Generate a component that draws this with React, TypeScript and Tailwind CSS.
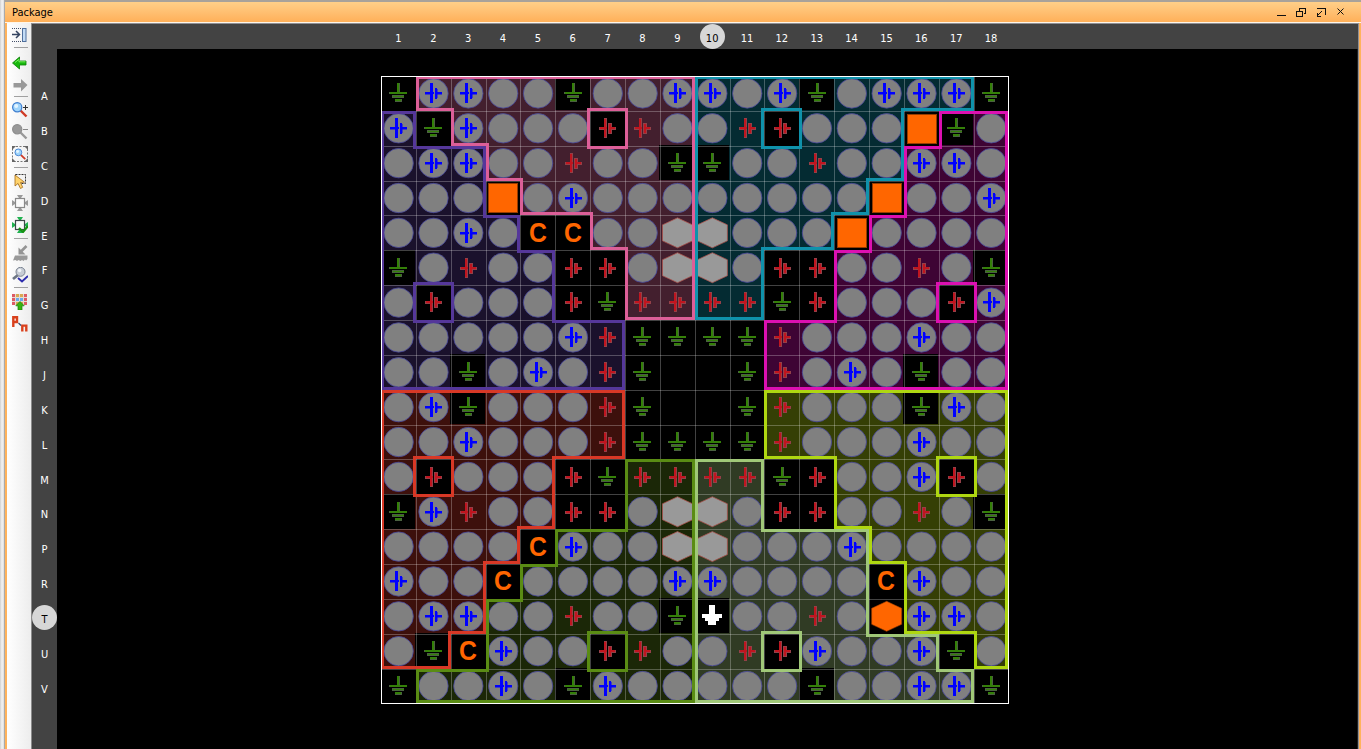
import type { ReactNode } from "react";

const PITCH = 34.86;
const SIZE = 628;
const COUNT = 18;

const ROW_NAMES = "ABCDEFGHJKLMNPRTUV".split("");

// One letter per I/O bank; "." marks a pad outside every bank.
const REGIONS = [
  ".pppppppptttttttt.",
  "u.pppp.pptt.ttt.mm",
  "uuuppppppttttttmmm",
  "uuu.pppppttttt.mmm",
  "uuuu..ppptttt.mmmm",
  "uuuuu..pptt..mmmmm",
  "u.uuu..pptt..mmm.m",
  "uuuuuuu....mmmmmmm",
  "uuuuuuu....mmmmmmm",
  "rrrrrrr....yyyyyyy",
  "rrrrrrr....yyyyyyy",
  "r.rrr..ggll..yyy.y",
  "rrrrr..ggll..yyyyy",
  "rrrr.gggglllllyyyy",
  "rrr.ggggglllll.yyy",
  "rrrgggggglllll.yyy",
  "rr.ggg.ggll.llll.y",
  ".ggggggggllllllll.",
];

// o ball, b bank supply, r core supply, g ground, h/H hexagon, s square, C config, w cursor
const PINS = [
  "gbboogoobbobgobbbg",
  "bgbooorroorrooosgo",
  "obboorooggooroobbo",
  "ooosoboooooooosoob",
  "ooboCCoohhooosoooo",
  "gorooorr".slice(0, 5) + "rrohhorroorog",
  "orooorgrrrrgrooorb",
  "ooooobrggggroooboo",
  "oogoborg  grobogoo",
  "obgooorg  grooogbo",
  "oobooorggggroooboo",
  "orooorgrrrrgroobro",
  "gbroorrohhorroorog",
  "ooooCboohhoooboooo",
  "booCoooobbooooCboo",
  "obbooroogwooroHbbo".replace(" ", ""),
  "ogCboorroorrboobgo",
  "goobogbooooogoobbg",
];

const FILLS: Record<string, string> = {
  p: "#431f2e",
  t: "#042b32",
  u: "#1a112c",
  m: "#3e0434",
  r: "#3d100c",
  y: "#353f05",
  g: "#1b2707",
  l: "#303b24",
};

const EDGES: Record<string, string> = {
  p: "#dc5f98",
  t: "#0f92ab",
  u: "#55379a",
  m: "#dc10b1",
  r: "#d83826",
  y: "#afd711",
  g: "#5a8c14",
  l: "#a0c878",
};

const at = (i: number) => Math.floor(0.42 + PITCH * i);
const mid = (i: number) => 0.4 + PITCH * (i + 0.5);
const regionAt = (r: number, c: number) => REGIONS[r]?.[c] ?? ".";

const cells = PINS.flatMap((line, r) =>
  line.split("").map((kind, c) => ({ r, c, kind, region: regionAt(r, c) })),
);

function BankSupply() {
  return (
    <g fill="#0000ff" shapeRendering="crispEdges">
      <rect x="-8" y="-1" width="9" height="2" />
      <rect x="-3" y="-10" width="3" height="20" />
      <rect x="2" y="-5" width="2" height="11" />
      <rect x="2" y="-1" width="7" height="2" />
      <rect x="-8" y="1" width="8" height="1" fillOpacity="0.5" />
      <rect x="4" y="-4" width="1" height="9" fillOpacity="0.5" />
      <rect x="4" y="1" width="5" height="1" fillOpacity="0.5" />
    </g>
  );
}

function CoreSupply() {
  return (
    <g shapeRendering="crispEdges">
      <g fill="#934048">
        <rect x="-8" y="-1" width="8" height="3" />
        <rect x="-3" y="-10" width="3" height="20" />
        <rect x="1" y="-5" width="4" height="11" />
        <rect x="2" y="-1" width="7" height="3" />
      </g>
      <g fill="#c0151f">
        <rect x="-7" y="-1" width="7" height="2" />
        <rect x="-3" y="-9" width="2" height="18" />
        <rect x="2" y="-4" width="2" height="9" />
        <rect x="3" y="-1" width="5" height="2" />
      </g>
    </g>
  );
}

function Ground() {
  return (
    <g shapeRendering="crispEdges">
      <g fill="#4a6040">
        <rect x="-1" y="-10" width="3" height="9" />
        <rect x="-9" y="-1" width="18" height="2" />
        <rect x="-6" y="2" width="12" height="3" />
        <rect x="-3" y="6" width="7" height="3" />
      </g>
      <g fill="#348008">
        <rect x="-1" y="-10" width="2" height="10" />
        <rect x="-8" y="-1" width="17" height="2" />
        <rect x="-5" y="3" width="11" height="1" />
        <rect x="-3" y="6" width="6" height="2" />
      </g>
    </g>
  );
}

const HEX = "0,-15 15,-8 15,8 0,15 -15,8 -15,-8";

function Ball() {
  return <circle r="14.7" fill="#808080" stroke="#45459b" strokeWidth="0.8" />;
}

function Glyph({ kind }: { kind: string }) {
  switch (kind) {
    case "b":
      return <BankSupply />;
    case "r":
      return <CoreSupply />;
    case "g":
      return <Ground />;
    case "C":
      return (
        <text
          x="0"
          y="9"
          textAnchor="middle"
          fill="#ff6600"
          transform="scale(.92 1)"
          className="font-['Liberation_Sans',sans-serif] text-[27px] font-bold"
        >
          C
        </text>
      );
    case "w":
      return (
        <path
          d="M-3-11H3V-2H10V2H7V5H4V9H-4V5H-7V2H-10V-2H-3z"
          fill="#fff"
          shapeRendering="crispEdges"
        />
      );
    default:
      return null;
  }
}

function Body({ kind }: { kind: string }) {
  switch (kind) {
    case "o":
    case "b":
      return <Ball />;
    case "h":
      return <polygon points={HEX} fill="#999999" stroke="#a8504b" strokeWidth="0.8" />;
    case "H":
      return <polygon points={HEX} fill="#ff6600" stroke="#a04000" strokeWidth="0.6" />;
    default:
      return null;
  }
}

function RegionEdge({ r, c, region }: { r: number; c: number; region: string }) {
  const x0 = at(c) + (c === 0 ? 1 : 0);
  const y0 = at(r) + (r === 0 ? 1 : 0);
  const x1 = at(c + 1);
  const y1 = at(r + 1);
  const w = x1 - x0;
  const h = y1 - y0;
  const left = c === 0 ? 2 : 3;
  const top = r === 0 ? 2 : 3;
  const same = (dr: number, dc: number) => regionAt(r + dr, c + dc) === region;
  const parts: [number, number, number, number][] = [];
  if (!same(-1, 0)) parts.push([x0, y0, w, top]);
  if (!same(1, 0)) parts.push([x0, y1 - 3, w, 3]);
  if (!same(0, -1)) parts.push([x0, y0, left, h]);
  if (!same(0, 1)) parts.push([x1 - 3, y0, 3, h]);
  if (!same(-1, -1)) parts.push([x0, y0, left, top]);
  if (!same(-1, 1)) parts.push([x1 - 3, y0, 3, top]);
  if (!same(1, -1)) parts.push([x0, y1 - 3, left, 3]);
  if (!same(1, 1)) parts.push([x1 - 3, y1 - 3, 3, 3]);
  return (
    <g fill={EDGES[region]}>
      {parts.map(([x, y, pw, ph], i) => (
        <rect key={i} x={x} y={y} width={pw} height={ph} />
      ))}
    </g>
  );
}

function PackageMap() {
  const inRegion = cells.filter((cell) => cell.region !== ".");
  return (
    <svg width={SIZE} height={SIZE} viewBox={`0 0 ${SIZE} ${SIZE}`} className="block">
      <g shapeRendering="crispEdges">
        {inRegion.map(({ r, c, region }) => (
          <rect
            key={`${r}-${c}`}
            x={at(c)}
            y={at(r)}
            width={at(c + 1) - at(c)}
            height={at(r + 1) - at(r)}
            fill={FILLS[region]}
          />
        ))}
        {inRegion
          .filter(({ kind }) => kind === "g" || kind === "w")
          .map(({ r, c }) => (
            <rect
              key={`${r}-${c}`}
              x={Math.floor(PITCH * c - 0.08)}
              y={Math.floor(PITCH * r - 0.08)}
              width="35"
              height="35"
              fill="#000"
            />
          ))}
        {Array.from({ length: COUNT - 1 }, (_, i) => (
          <g key={i} fill="#fff" fillOpacity="0.26">
            <rect x={at(i + 1)} y="0" width="1" height={SIZE} />
            <rect x="0" y={at(i + 1)} width={SIZE} height="1" />
          </g>
        ))}
      </g>
      {cells.map(({ r, c, kind }) => (
        <g key={`${r}-${c}`}>
          {kind === "s" ? (
            <rect
              x={Math.round(mid(c)) - 14.5}
              y={Math.round(mid(r)) - 14.5}
              width="29"
              height="29"
              fill="#ff6600"
              stroke="#963c00"
              shapeRendering="crispEdges"
            />
          ) : (
            <>
              <g transform={`translate(${mid(c) - 0.2} ${mid(r) - 0.4})`}>
                <Body kind={kind} />
              </g>
              <g transform={`translate(${Math.floor(mid(c))} ${Math.floor(mid(r))})`}>
                <Glyph kind={kind} />
              </g>
            </>
          )}
        </g>
      ))}
      <g shapeRendering="crispEdges">
        {inRegion.map(({ r, c, region }) => (
          <RegionEdge key={`${r}-${c}`} r={r} c={c} region={region} />
        ))}
      </g>
      <rect x="0.5" y="0.5" width={SIZE - 1} height={SIZE - 1} fill="none" stroke="#fff" shapeRendering="crispEdges" />
    </svg>
  );
}

function Tool({ label, children }: { label: string; children: ReactNode }) {
  return (
    <button aria-label={label} className="flex h-[22px] w-full items-center justify-center pl-0.5">
      <svg width="16" height="16" viewBox="0 0 16 16" fill="none">
        {children}
      </svg>
    </button>
  );
}

function Magnifier({ muted }: { muted?: boolean }) {
  return (
    <>
      <path d="M8.5 8.5l6 6" stroke={muted ? "#999" : "#cf3a25"} strokeWidth="2.4" />
      <circle cx="5.2" cy="5.2" r="4.6" fill={muted ? "#999" : "#9fd4fb"} stroke={muted ? "#8f8f8f" : "#3f7fd0"} strokeWidth="1.2" />
      {!muted && <circle cx="4.2" cy="4" r="2" fill="#e3f5ff" />}
    </>
  );
}

function ChipPorts({ port, body }: { port: string; body: string }) {
  return (
    <>
      <path d="M5 0h6L9 3H7zM5 16h6l-2-3H7zM0 5v6l3-2V7zM16 5v6l-3-2V7z" fill={port} />
      <rect x="3.500" y="3.500" width="9" height="9" fill="#fafafa" stroke={body} strokeWidth="1.200" />
    </>
  );
}

function Toolbar() {
  return (
    <aside className="flex w-6 shrink-0 flex-col bg-linear-to-r from-white to-[#ededed] pt-px">
      <Tool label="Show panel">
        <path d="M0 1.500h9M0 14.500h9" stroke="#44506a" strokeDasharray="1 1" />
        <path d="M0 7.500h7M4 4l3.500 3.500L4 11" stroke="#34435f" strokeWidth="1.500" />
        <rect x="10.500" y="1.500" width="3.500" height="13" fill="#c4dcf5" stroke="#4f6f9c" />
      </Tool>
      <div className="mt-px mb-1 ml-[7px] h-px w-[14px] bg-[#a0a0a0]" />
      <Tool label="Back">
        <path d="M.5 8l7-6v4H14v4H7.500v4z" fill="#18b80d" stroke="#0b7f06" strokeWidth=".8" />
        <path d="M3 7.500l4-3.200v2.500h6.500" stroke="#7cee62" />
      </Tool>
      <Tool label="Forward">
        <path d="M15.500 8l-6.500-6v4H1.500v4.500h7.500v4z" fill="#999" />
      </Tool>
      <div className="mb-0.5 ml-[7px] h-px w-[14px] bg-[#a0a0a0]" />
      <Tool label="Zoom in">
        <Magnifier />
        <path d="M11 5.500h5M13.500 3v5" stroke="#333" />
      </Tool>
      <Tool label="Zoom out">
        <Magnifier muted />
        <path d="M11 5.500h5" stroke="#888" />
      </Tool>
      <Tool label="Zoom fit">
        <rect x=".5" y=".5" width="15" height="15" stroke="#777" strokeDasharray="2 1.500" />
        <path d="M0 4V0h4zM12 0h4v4zM16 12v4h-4zM4 16H0v-4z" fill="#666" />
        <g transform="translate(2.500 2.500) scale(.74)">
          <Magnifier />
        </g>
      </Tool>
      <div className="mt-0.5 mb-0.5 ml-[7px] h-px w-[14px] bg-[#a0a0a0]" />
      <Tool label="Select area">
        <rect x="3.500" y="1.500" width="10" height="9" stroke="#333" strokeDasharray="2 1" />
        <path d="M3 2v11l3-2.500 2.500 5 2.200-1.200L8.500 9.500l4-.3z" fill="#ffd36c" stroke="#a36b18" strokeWidth=".8" />
      </Tool>
      <Tool label="Place ports">
        <ChipPorts port="#999" body="#8a8a8a" />
      </Tool>
      <Tool label="Check ports">
        <ChipPorts port="#20b350" body="#3d4a48" />
        <path d="M7 11l4 4 5-6" stroke="#149112" strokeWidth="2.200" />
      </Tool>
      <div className="mt-0.5 mb-[3px] ml-[7px] h-px w-[14px] bg-[#a0a0a0]" />
      <Tool label="Assign">
        <path d="M1 15.500l2-5h12.500v3.500l-1.500 1.500-1-1-1.500 1.500-1.500-1-1.500 1-2-1-1.500 1-1.500-1z" fill="#999" />
        <path d="M14.500 1L9 6.500" stroke="#949494" strokeWidth="2.600" />
        <path d="M6.500 2.500v7h7z" fill="#949494" />
      </Tool>
      <Tool label="Run checks">
        <path d="M6 8l-5 4" stroke="#6d7684" strokeWidth="2.800" />
        <circle cx="8.500" cy="4.800" r="4.500" fill="#c8cdd5" stroke="#7b8492" />
        <circle cx="7.600" cy="3.500" r="1.800" fill="#f2f5f8" />
        <path d="M6 11l4 3.500L16 9" stroke="#2d2dad" strokeWidth="1.900" />
      </Tool>
      <div className="mt-px mb-[3px] ml-[7px] h-px w-[14px] bg-[#a0a0a0]" />
      <Tool label="Export package">
        <rect width="15" height="11" fill="#e6dcd2" />
        <g shapeRendering="crispEdges">
          {[0, 1, 2].flatMap((r) =>
            [0, 1, 2, 3].map((c) => (
              <rect
                key={`${r}-${c}`}
                x={c * 4}
                y={r * 4}
                width="3"
                height="3"
                fill={c === 0 || c === 3 ? "#de5b65" : r === 1 ? "#6aa9ec" : "#d9a954"}
              />
            )),
          )}
        </g>
        <path d="M8 7.500l4.200 4.300H10V16H6v-4.200H3.800z" fill="#38b40e" stroke="#1b8106" strokeWidth=".7" />
      </Tool>
      <Tool label="Differential pairs">
        <path d="M1.300 11V0M1.300 1.300H5V6H1.300" stroke="#d9411d" strokeWidth="2.400" />
        <path d="M10.300 15.500V8.500M10.300 9.600h4v5.900" stroke="#d9411d" strokeWidth="2.400" />
        <path d="M6.500 7l2.500 2.500" stroke="#31496c" strokeWidth="1.200" />
      </Tool>
    </aside>
  );
}

function WindowControls() {
  return (
    <svg width="70" height="12" viewBox="0 0 70 12" fill="none" stroke="#111" shapeRendering="crispEdges">
      <path d="M0 9.500h9" />
      <path d="M22.500 3V2.500h6v5h-2M22.500 5V2.500h6M19.500 5.500h6v5h-6z" />
      <path d="M40 2.500h8.500V9M44.500 5.500l-4 4M40.500 7v3H44" />
      <path d="M60.500 2.500l6 6M66.500 2.500l-6 6" shapeRendering="auto" />
    </svg>
  );
}

function AxisLabel({ text, selected }: { text: string | number; selected: boolean }) {
  return (
    <span
      className={`flex size-[25px] shrink-0 items-center justify-center pt-[6px] ${
        selected ? "rounded-full bg-[#d7d7d7] text-black" : ""
      }`}
    >
      {text}
    </span>
  );
}

export default function App() {
  return (
    <div className="flex h-[749px] w-[1361px] overflow-hidden bg-[#ffb35c] font-['DejaVu_Sans_Condensed','DejaVu_Sans',sans-serif] text-[11px]">
      <div className="w-[5px] shrink-0 border-r border-[#aaa] bg-linear-to-r from-[#d0d0d0] via-[#f4f4f4] to-[#dedede]" />
      <div className="flex min-w-0 flex-1 flex-col border-t-2 border-[#a8a29a]">
        <header className="flex h-5 shrink-0 items-center justify-between bg-linear-to-b from-[#ffcf88] to-[#ffb059] pr-3.5 pl-[7px] text-black">
          <h1 className="pt-0.5 text-[11px] font-normal">Package</h1>
          <WindowControls />
        </header>
        <div className="flex min-h-0 flex-1 border-t border-[#fff6e8] pr-[2px] pl-[2px]">
          <Toolbar />
          <main className="flex min-w-0 flex-1 flex-col border-t border-r border-[#8f9096] bg-[#434343] text-white">
            <div className="flex h-[25px] shrink-0 border-l border-[#8b8b8b] pl-[349px]">
              {Array.from({ length: COUNT }, (_, i) => (
                <div key={i} className="flex w-[34.860px] shrink-0 items-center justify-center">
                  <AxisLabel text={i + 1} selected={i === 9} />
                </div>
              ))}
            </div>
            <div className="flex min-h-0 flex-1">
              <div className="flex w-[26px] shrink-0 flex-col border-l border-[#8b8b8b] pt-[28px]">
                {ROW_NAMES.map((name) => (
                  <div key={name} className="flex h-[34.860px] shrink-0 items-center justify-center">
                    <AxisLabel text={name} selected={name === "T"} />
                  </div>
                ))}
              </div>
              <div className="flex-1 border-r border-[#222] bg-black pt-[27px] pl-[324px]">
                <PackageMap />
              </div>
            </div>
          </main>
        </div>
      </div>
    </div>
  );
}
